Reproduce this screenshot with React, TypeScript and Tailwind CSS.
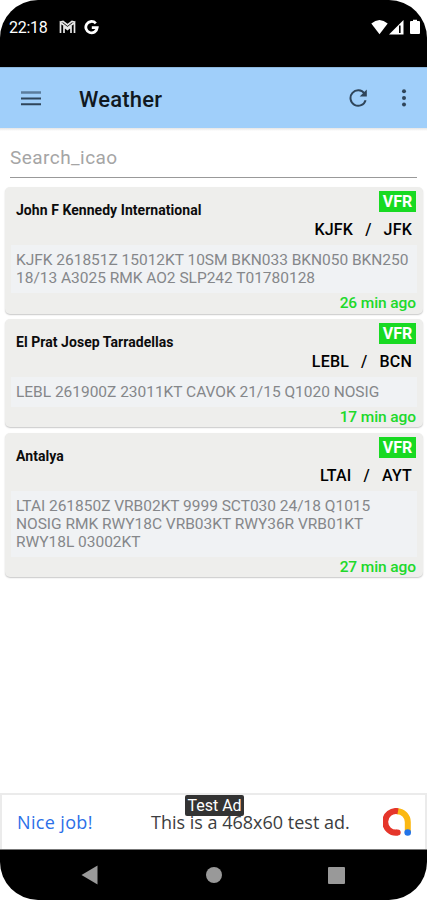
import React from "react"

type Station = {
  name: string
  icao: string
  iata: string
  metar: string[]
  age: string
}

const stations: Station[] = [
  {
    name: "John F Kennedy International",
    icao: "KJFK",
    iata: "JFK",
    metar: [
      "KJFK 261851Z 15012KT 10SM BKN033 BKN050 BKN250",
      "18/13 A3025 RMK AO2 SLP242 T01780128",
    ],
    age: "26 min ago",
  },
  {
    name: "El Prat Josep Tarradellas",
    icao: "LEBL",
    iata: "BCN",
    metar: ["LEBL 261900Z 23011KT CAVOK 21/15 Q1020 NOSIG"],
    age: "17 min ago",
  },
  {
    name: "Antalya",
    icao: "LTAI",
    iata: "AYT",
    metar: [
      "LTAI 261850Z VRB02KT 9999 SCT030 24/18 Q1015",
      "NOSIG RMK RWY18C VRB03KT RWY36R VRB01KT",
      "RWY18L 03002KT",
    ],
    age: "27 min ago",
  },
]

function StatusBar() {
  return (
    <div className="flex h-[67px] shrink-0 items-start bg-black pl-[9px] pr-[7px] pt-[18px] text-white">
      <span className="w-[50px] text-[16px] leading-[19px] tracking-[-0.3px]">
        22:18
      </span>
      <svg className="mt-[2px] h-[14px] w-[17px]" viewBox="0 0 17 14">
        <path
          d="M1.500 13V2.500L8.500 8l7-5.500V13M5 13V6.500L8.500 9.500 12 6.500V13M1.500 2l2.500-.6 4.500 3.600 4.500-3.600 2.500.6"
          fill="none"
          stroke="#e8e8e8"
          strokeWidth="1.700"
        />
      </svg>
      <svg className="ml-[8px] mt-[2px] h-[15px] w-[15px]" viewBox="0 0 15 15">
        <path
          d="M11.800 3.400A5.700 5.700 0 1 0 13.200 7.700H7.800"
          fill="none"
          stroke="white"
          strokeWidth="2.800"
        />
      </svg>
      <svg className="ml-auto mt-[1px] h-4 w-[17px]" viewBox="0 0 17 16">
        <path d="M0.300 4.500Q8.500-2.500 16.700 4.500L8.500 15.200Z" fill="white" />
      </svg>
      <svg className="ml-px mt-[1px] h-4 w-[15px]" viewBox="0 0 15 16">
        <path d="M0 15.500L14.500 1V15.500Z" fill="white" />
        <path d="M10.800 6.500v7.500" stroke="black" strokeWidth="1.600" />
      </svg>
      <svg className="ml-[6px] mt-[1px] h-4 w-[10px]" viewBox="0 0 10 16">
        <path
          d="M1 2h2V0.800h4V2h2q1 0 1 1v11q0 1-1 1H1q-1 0-1-1V3q0-1 1-1Z"
          fill="white"
        />
      </svg>
    </div>
  )
}

function Toolbar() {
  return (
    <header className="flex h-[61px] shrink-0 items-center border-t border-[#8db7dc] bg-[#a0cffa] pl-[21px] pr-[20px] text-[#2f455a]">
      <svg className="h-[15px] w-5" viewBox="0 0 20 15">
        <path d="M0 1.500h20" stroke="#5b7c9c" strokeWidth="2.400" />
        <path d="M0 7.500h20M0 13.200h20" stroke="currentColor" strokeWidth="1.900" />
      </svg>
      <h1 className="ml-[38px] mt-[4px] text-[22px] font-medium leading-[26px] tracking-[0.2px] text-[#101820]">
        Weather
      </h1>
      <svg className="ml-auto h-[18px] w-[18px]" viewBox="0 0 18 18">
        <path
          d="M15.500 4.600A7.700 7.700 0 1 0 16.600 11.200"
          fill="none"
          stroke="currentColor"
          strokeWidth="2"
        />
        <path d="M17.800 0.500V7.600H10.700Z" fill="currentColor" />
      </svg>
      <svg className="ml-[34px] h-[18px] w-[6px]" viewBox="0 0 6 18">
        <circle cx="3" cy="2.300" r="2" fill="currentColor" />
        <circle cx="3" cy="8.900" r="2" fill="currentColor" />
        <circle cx="3" cy="15.500" r="2" fill="currentColor" />
      </svg>
    </header>
  )
}

function StationCard({ station }: { station: Station }) {
  return (
    <article className="rounded-[5px] bg-[#eeeeec] shadow-[0_1px_1.5px_rgba(0,0,0,0.22)]">
      <div className="flex h-[58px] justify-between pl-[11px] pr-[7px] pt-1">
        <h2 className="mt-[11px] whitespace-nowrap text-[14px] font-bold leading-4 tracking-[0.05px] text-[#0c0c0c]">
          {station.name}
        </h2>
        <div className="flex flex-col items-end">
          <span className="flex h-[21px] w-[37px] items-center justify-center bg-[#18da22] text-[16px] font-bold leading-[21px] text-white">
            VFR
          </span>
          <div className="mr-[4px] mt-2 flex text-[16px] font-medium leading-5 tracking-[0.2px] text-black">
            <span>{station.icao}</span>
            <span className="mx-3">/</span>
            <span>{station.iata}</span>
          </div>
        </div>
      </div>
      {/* Raw METAR */}
      <div className="mx-[6px] bg-[#f0f2f4] px-[5px] py-[6px] text-[15.5px] leading-[18px] tracking-[-0.02px] text-[#85878a]">
        {station.metar.map((line) => (
          <p key={line} className="whitespace-nowrap">
            {line}
          </p>
        ))}
      </div>
      <p className="h-[20.5px] pr-[7px] text-right text-[15.5px] font-medium leading-[20px] tracking-[-0.1px] text-[#20d92a]">
        {station.age}
      </p>
    </article>
  )
}

function AdBanner() {
  return (
    <div className="relative flex h-[56px] shrink-0 items-center border-2 border-b-0 border-[#ebebeb] bg-white pl-[15px] pr-[14px] font-['Open_Sans',sans-serif]">
      <span className="w-[134px] whitespace-nowrap text-[18px] tracking-[0.35px] text-[#2b70e8]">
        Nice job!
      </span>
      <span className="whitespace-nowrap text-[18px] text-[#3c3d40]">
        This is a 468x60 test ad.
      </span>
      <svg className="ml-auto h-7 w-7" viewBox="0 0 28 28">
        <path
          d="M14 3.200A10.800 10.800 0 0 1 24.800 14V24"
          fill="none"
          stroke="#fbb812"
          strokeWidth="6"
        />
        <path
          d="M15 3.200A10.800 10.800 0 1 0 14.500 24.500"
          fill="none"
          stroke="#e5362b"
          strokeWidth="6"
        />
        <circle cx="14.700" cy="24.500" r="3" fill="#e5362b" />
        <circle cx="24.700" cy="24.500" r="3.300" fill="#2374e8" />
      </svg>
      <span className="absolute left-[183px] top-0 flex h-[21px] w-[59px] items-center justify-center whitespace-nowrap rounded-[2px] bg-[#333333] font-[Roboto] text-[16px] text-white">
        Test Ad
      </span>
    </div>
  )
}

function NavigationBar() {
  return (
    <nav className="flex h-[51px] shrink-0 items-center border-t border-[#777777] bg-black pl-[81px] pr-[82px]">
      <svg className="h-5 w-[17px]" viewBox="0 0 17 20">
        <path d="M0.500 10L16.500 0.500V19.500Z" fill="#999999" />
      </svg>
      <span className="ml-[108px] h-4 w-4 rounded-full bg-[#999999]" />
      <span className="ml-auto h-[17px] w-[17px] rounded-[1px] bg-[#999999]" />
    </nav>
  )
}

function App() {
  return (
    <div className="h-[900px] w-[427px] bg-white font-[Roboto,sans-serif]">
      <div className="flex h-full flex-col overflow-hidden rounded-[38px] bg-white">
        <StatusBar />
        <Toolbar />
        <div className="h-[3px] shrink-0 bg-gradient-to-b from-[#e5e5e5] to-white" />
        <div className="mx-[10px] h-[47px] shrink-0 border-b border-[#999999] pt-[15px]">
          <input
            className="block h-[24px] w-full text-[19px] leading-[24px] tracking-[0.45px] text-[#444444] outline-none placeholder:text-[#a5a5a5]"
            type="text"
            placeholder="Search_icao"
          />
        </div>
        <main className="flex flex-1 flex-col gap-[5.3px] pl-[5px] pr-1 pt-[9px]">
          {stations.map((station) => (
            <StationCard key={station.icao} station={station} />
          ))}
        </main>
        <AdBanner />
        <NavigationBar />
      </div>
    </div>
  )
}

export default App
